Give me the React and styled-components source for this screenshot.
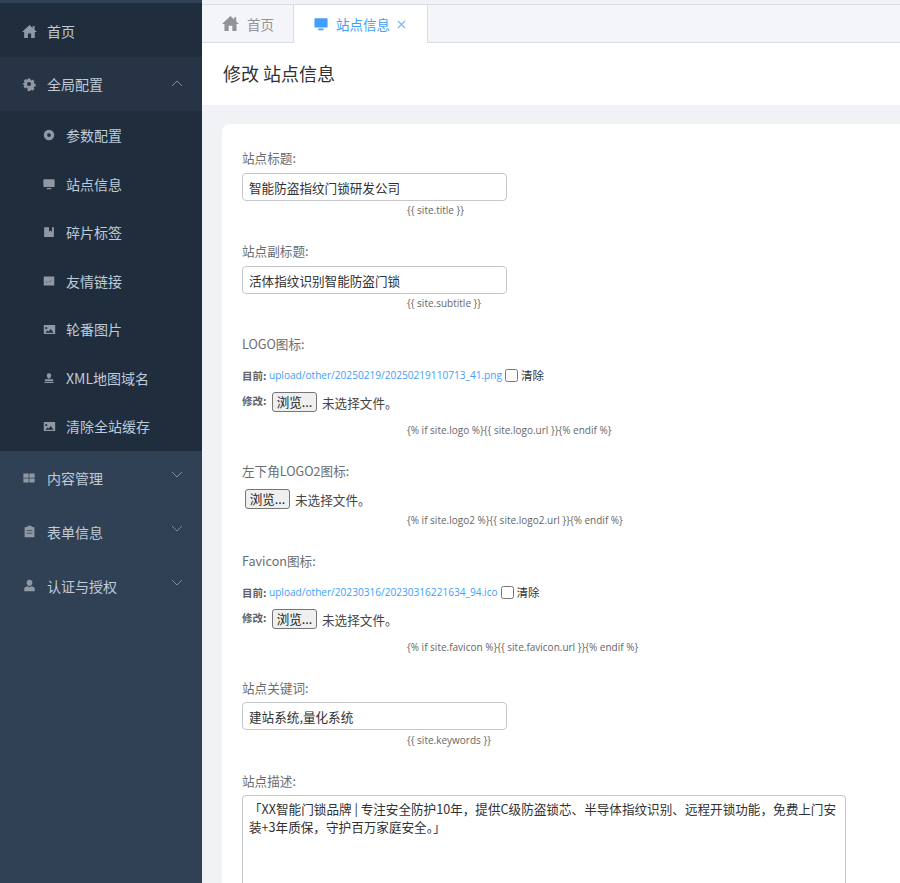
import React from 'react';
import styled, { createGlobalStyle } from 'styled-components';

const GlobalStyle = createGlobalStyle`
  html, body {
    margin: 0;
    padding: 0;
    height: 100%;
    overflow: hidden;
    font-family: "Noto Sans CJK SC", "Noto Sans", sans-serif;
  }
`;

const Layout = styled.div`
  display: flex;
  width: 900px;
  height: 883px;
  overflow: hidden;
  background: #f0f2f5;
`;

const Sidebar = styled.aside`
  flex: 0 0 202px;
  padding-top: 3px;
  background: #304156;
`;

const MenuRow = styled.div`
  display: flex;
  align-items: center;
  box-sizing: border-box;
  height: 54px;
  padding: ${(p) => (p.$tone === 'dark' ? 2 : 0)}px 0 0 21px;
  background: ${(p) => (p.$tone === 'open' ? '#263445' : p.$tone === 'dark' ? '#1f2d3d' : 'transparent')};
  color: #bfcbd9;
  font-size: 14px;
`;

const SubMenu = styled.div`
  background: #1f2d3d;
`;

const SubRow = styled.div`
  display: flex;
  align-items: center;
  height: 48.5px;
  padding-left: 41px;
  color: #bfcbd9;
  font-size: 14px;
`;

const IconSlot = styled.span`
  display: flex;
  justify-content: center;
  align-items: center;
  flex: 0 0 16px;
  margin-right: ${(p) => (p.$top ? 10 : 9)}px;
  color: #8f98a3;
`;

const RowLabel = styled.span`
  flex: 1;
`;

const Arrow = styled.span`
  display: flex;
  margin-right: 19px;
  margin-top: ${(p) => (p.$up ? '-2px' : '-6px')};
  color: #7f8b99;
`;

const Main = styled.main`
  flex: 1;
  min-width: 0;
`;

const TabBar = styled.div`
  display: flex;
  height: 37px;
  margin-top: 4px;
  border-top: 1px solid #d8dce5;
  border-bottom: 1px solid #d8dce5;
  background: #f4f5f8;
`;

const Tab = styled.div`
  display: flex;
  align-items: center;
  gap: 8px;
  box-sizing: border-box;
  height: ${(p) => (p.$active ? '38px' : '37px')};
  padding: ${(p) => (p.$active ? '0 21px 0 20px' : '0 19px 0 20px')};
  background: ${(p) => (p.$active ? '#fff' : 'transparent')};
  border-left: ${(p) => (p.$active ? '1px solid #d8dce5' : 'none')};
  border-right: ${(p) => (p.$active ? '1px solid #d8dce5' : 'none')};
  color: ${(p) => (p.$active ? '#409eff' : '#909399')};
  font-size: 13.5px;
`;

const TabClose = styled.span`
  display: flex;
  margin-left: -1px;
  color: #6fb5fa;
`;

const PageHeader = styled.div`
  display: flex;
  align-items: center;
  box-sizing: border-box;
  height: 62px;
  padding: 0 0 2px 21px;
  background: #fff;
  color: #303133;
  font-size: 18px;
`;

const Content = styled.div`
  padding: 19px 0 0 20px;
`;

const Card = styled.form`
  box-sizing: border-box;
  width: 720px;
  height: 800px;
  padding: 24px 20px 0;
  border-radius: 8px 0 0 0;
  background: #fff;
`;

const FieldLabel = styled.label`
  display: block;
  height: 20px;
  color: #6a6d72;
  font-size: 12.6px;
  line-height: 20px;
`;

const TextInput = styled.input`
  display: block;
  box-sizing: border-box;
  width: 265px;
  height: 28px;
  margin-top: ${(p) => p.$gap || 5}px;
  padding: 0 6px;
  border: 1px solid #c4c7cc;
  border-radius: 4px;
  color: #303133;
  font-family: inherit;
  font-size: 12.6px;
`;

const Help = styled.div`
  height: 16px;
  margin: ${(p) => p.$top ?? 1}px 0 23px 165px;
  color: #666;
  font-family: "Open Sans", sans-serif;
  font-size: 10px;
  line-height: 16px;
  white-space: nowrap;
`;

const CurrentRow = styled.div`
  display: flex;
  align-items: center;
  height: 20px;
  margin-top: 11px;
  color: #303133;
  font-size: 11.5px;
`;

const Tag = styled.b`
  flex: 0 0 ${(p) => p.$width}px;
  margin-top: ${(p) => p.$lift || 0}px;
  color: #606266;
  font-size: 10.5px;
  font-weight: 700;
`;

const FileLink = styled.a`
  color: #409eff;
  font-family: "Open Sans", sans-serif;
  font-size: 10.1px;
  white-space: nowrap;
`;

const ClearBox = styled.input`
  box-sizing: border-box;
  width: 13px;
  height: 13px;
  margin: 0 3px;
`;

const FileRow = styled.div`
  display: flex;
  align-items: center;
  height: 24px;
  margin-top: ${(p) => p.$top}px;
  margin-left: ${(p) => p.$indent || 0}px;
`;

const BrowseButton = styled.button`
  box-sizing: border-box;
  width: 45px;
  height: 20px;
  margin-right: 5px;
  padding: 0;
  border: 1px solid #767676;
  border-radius: 3px;
  background: #efefef;
  color: #222;
  font-family: inherit;
  font-size: 12.6px;
  line-height: 18px;
`;

const FileState = styled.span`
  color: #444;
  font-size: 12.6px;
`;

const TextArea = styled.textarea`
  display: block;
  box-sizing: border-box;
  width: 604px;
  height: 140px;
  margin-top: 4px;
  padding: 4px 6px;
  border: 1px solid #c4c7cc;
  border-radius: 4px;
  color: #303133;
  font-family: inherit;
  font-size: 12.6px;
  line-height: 18px;
  resize: none;
`;

const Glyph = ({ size = 14, children }) => (
  <svg width={size} height={size} viewBox="0 0 16 16" fill="currentColor">
    {children}
  </svg>
);

const HomeIcon = ({ size }) => (
  <Glyph size={size}>
    <path d="M8 1 0 8.400h2.300V15h4v-4.800h3.400V15h4V8.400H16l-2.600-2.400V2h-2v2.200z" />
  </Glyph>
);
const GearIcon = () => (
  <Glyph size={14}>
    <path fillRule="evenodd" d="M6.300 1h3.400l.3 1.900 1.100.5 1.600-1.100 2.400 2.400-1.100 1.600.5 1.100 1.900.3v3.400l-1.900.3-.5 1.100 1.100 1.600-2.400 2.400-1.600-1.100-1.100.5-.3 1.900H6.300L6 13.100l-1.100-.5-1.600 1.100-2.400-2.400 1.100-1.600-.5-1.100L0 8.300V6.900l1.900-.3.500-1.100-1.100-1.600 2.400-2.400 1.600 1.100 1.100-.5zM8 5.400a2.600 2.600 0 1 0 0 5.200 2.600 2.600 0 0 0 0-5.200z" transform="translate(0.800 0.800) scale(0.900)" />
  </Glyph>
);
const DotCircleIcon = () => (
  <Glyph size={12}>
    <path fillRule="evenodd" d="M8 1a7 7 0 1 0 0 14A7 7 0 0 0 8 1zm0 4.500a2.500 2.500 0 1 1 0 5 2.500 2.500 0 0 1 0-5z" />
  </Glyph>
);
const MonitorIcon = ({ size = 12 }) => (
  <Glyph size={size}>
    <path d="M1.500 1.500h13a1 1 0 0 1 1 1v8.500a1 1 0 0 1-1 1h-13a1 1 0 0 1-1-1V2.500a1 1 0 0 1 1-1zM5 13.200h6V15H5z" />
  </Glyph>
);
const BookIcon = () => (
  <Glyph size={12}>
    <path d="M1.500 1.500h6.500v6l2-1.500 2 1.500v-6h2.500v13h-13z" />
  </Glyph>
);
const ChartIcon = () => (
  <Glyph size={12}>
    <path fillRule="evenodd" d="M1 2h14v12H1zm3 8.800 2.500-2 2 1 3-2.500-.3-.300-2.700 2.200-2-1-2.800 2.200z" />
  </Glyph>
);
const PictureIcon = () => (
  <Glyph size={13}>
    <path fillRule="evenodd" d="M1 2.500h14v11H1zm3 2.500a1.300 1.300 0 1 0 0 2.600A1.300 1.300 0 0 0 4 5zm-1 7h10L9.500 7.500 7 10.500 5.500 9.300z" />
  </Glyph>
);
const StampIcon = () => (
  <Glyph size={12}>
    <path d="M8 1.500a3 3 0 0 1 3 3c0 1.500-1.400 2.500-1.400 4.200H6.400C6.400 7 5 6 5 4.500a3 3 0 0 1 3-3zM2.500 9.500h11V12h-11zM2 13h12v1.500H2z" />
  </Glyph>
);
const GridIcon = () => (
  <Glyph size={12}>
    <path d="M.5 2h7v5.500h-7zM8.500 2h7v5.500h-7zM.5 8.500h7V14h-7zM8.500 8.500h7V14h-7z" />
  </Glyph>
);
const ClipboardIcon = () => (
  <Glyph size={13}>
    <path fillRule="evenodd" d="M5.500 1h5v1.500H13a1 1 0 0 1 1 1V15H2V3.500a1 1 0 0 1 1-1h2.500zM4.500 6.500v1h7v-1zm0 3v1h7v-1z" />
  </Glyph>
);
const PersonIcon = () => (
  <Glyph size={13}>
    <path d="M8 1a3.500 3.500 0 0 1 3.500 3.600c0 2-1.500 4-3.500 4s-3.500-2-3.500-4A3.500 3.500 0 0 1 8 1zM5.500 9c1.500 1 3.500 1 5 0 2.500.5 4 1.800 4 3.500V15h-13v-2.500C1.500 10.800 3 9.500 5.500 9z" />
  </Glyph>
);
const ChevronIcon = ({ up }) => (
  <svg width="12" height="7" viewBox="0 0 12 7" fill="none" stroke="currentColor" strokeWidth="1">
    <path d={up ? 'M1 6 6 1l5 5' : 'M1 1l5 5 5-5'} />
  </svg>
);
const CloseIcon = () => (
  <svg width="9" height="9" viewBox="0 0 9 9" fill="none" stroke="currentColor" strokeWidth="1.100">
    <path d="M1 1l7 7M8 1 1 8" />
  </svg>
);

const subItems = [
  { label: '参数配置', icon: <DotCircleIcon /> },
  { label: '站点信息', icon: <MonitorIcon /> },
  { label: '碎片标签', icon: <BookIcon /> },
  { label: '友情链接', icon: <ChartIcon /> },
  { label: '轮番图片', icon: <PictureIcon /> },
  { label: 'XML地图域名', icon: <StampIcon /> },
  { label: '清除全站缓存', icon: <PictureIcon /> },
];

const closedGroups = [
  { label: '内容管理', icon: <GridIcon /> },
  { label: '表单信息', icon: <ClipboardIcon /> },
  { label: '认证与授权', icon: <PersonIcon /> },
];

const App = () => (
  <>
    <GlobalStyle />
    <Layout>
      <Sidebar>
        <MenuRow $tone="dark">
          <IconSlot $top><HomeIcon size={15} /></IconSlot>
          <RowLabel>首页</RowLabel>
        </MenuRow>
        <MenuRow $tone="open">
          <IconSlot $top><GearIcon /></IconSlot>
          <RowLabel>全局配置</RowLabel>
          <Arrow $up><ChevronIcon up /></Arrow>
        </MenuRow>
        <SubMenu>
          {subItems.map((item) => (
            <SubRow key={item.label}>
              <IconSlot>{item.icon}</IconSlot>
              <RowLabel>{item.label}</RowLabel>
            </SubRow>
          ))}
        </SubMenu>
        {closedGroups.map((group) => (
          <MenuRow key={group.label}>
            <IconSlot $top>{group.icon}</IconSlot>
            <RowLabel>{group.label}</RowLabel>
            <Arrow><ChevronIcon /></Arrow>
          </MenuRow>
        ))}
      </Sidebar>

      <Main>
        <TabBar>
          <Tab><HomeIcon size={17} />首页</Tab>
          <Tab $active>
            <MonitorIcon size={14} />
            站点信息
            <TabClose><CloseIcon /></TabClose>
          </Tab>
        </TabBar>
        <PageHeader>修改 站点信息</PageHeader>
        <Content>
          <Card>
            <FieldLabel>站点标题:</FieldLabel>
            <TextInput defaultValue="智能防盗指纹门锁研发公司" />
            <Help>{'{{ site.title }}'}</Help>

            <FieldLabel>站点副标题:</FieldLabel>
            <TextInput defaultValue="活体指纹识别智能防盗门锁" />
            <Help>{'{{ site.subtitle }}'}</Help>

            <FieldLabel>LOGO图标:</FieldLabel>
            <CurrentRow>
              <Tag $width={27}>目前:</Tag>
              <FileLink>upload/other/20250219/20250219110713_41.png</FileLink>
              <ClearBox type="checkbox" />
              清除
            </CurrentRow>
            <FileRow $top={5}>
              <Tag $width={30} $lift={-3}>修改:</Tag>
              <BrowseButton type="button">浏览...</BrowseButton>
              <FileState>未选择文件。</FileState>
            </FileRow>
            <Help $top={8}>{'{% if site.logo %}{{ site.logo.url }}{% endif %}'}</Help>

            <FieldLabel>左下角LOGO2图标:</FieldLabel>
            <FileRow $top={6} $indent={3}>
              <BrowseButton type="button">浏览...</BrowseButton>
              <FileState>未选择文件。</FileState>
            </FileRow>
            <Help>{'{% if site.logo2 %}{{ site.logo2.url }}{% endif %}'}</Help>

            <FieldLabel>Favicon图标:</FieldLabel>
            <CurrentRow>
              <Tag $width={27}>目前:</Tag>
              <FileLink>upload/other/20230316/20230316221634_94.ico</FileLink>
              <ClearBox type="checkbox" />
              清除
            </CurrentRow>
            <FileRow $top={5}>
              <Tag $width={30} $lift={-3}>修改:</Tag>
              <BrowseButton type="button">浏览...</BrowseButton>
              <FileState>未选择文件。</FileState>
            </FileRow>
            <Help $top={8}>{'{% if site.favicon %}{{ site.favicon.url }}{% endif %}'}</Help>

            <FieldLabel>站点关键词:</FieldLabel>
            <TextInput $gap={4} defaultValue="建站系统,量化系统" />
            <Help $top={2}>{'{{ site.keywords }}'}</Help>

            <FieldLabel>站点描述:</FieldLabel>
            <TextArea defaultValue="「XX智能门锁品牌 | 专注安全防护10年，提供C级防盗锁芯、半导体指纹识别、远程开锁功能，免费上门安装+3年质保，守护百万家庭安全。」" />
          </Card>
        </Content>
      </Main>
    </Layout>
  </>
);

export default App;
